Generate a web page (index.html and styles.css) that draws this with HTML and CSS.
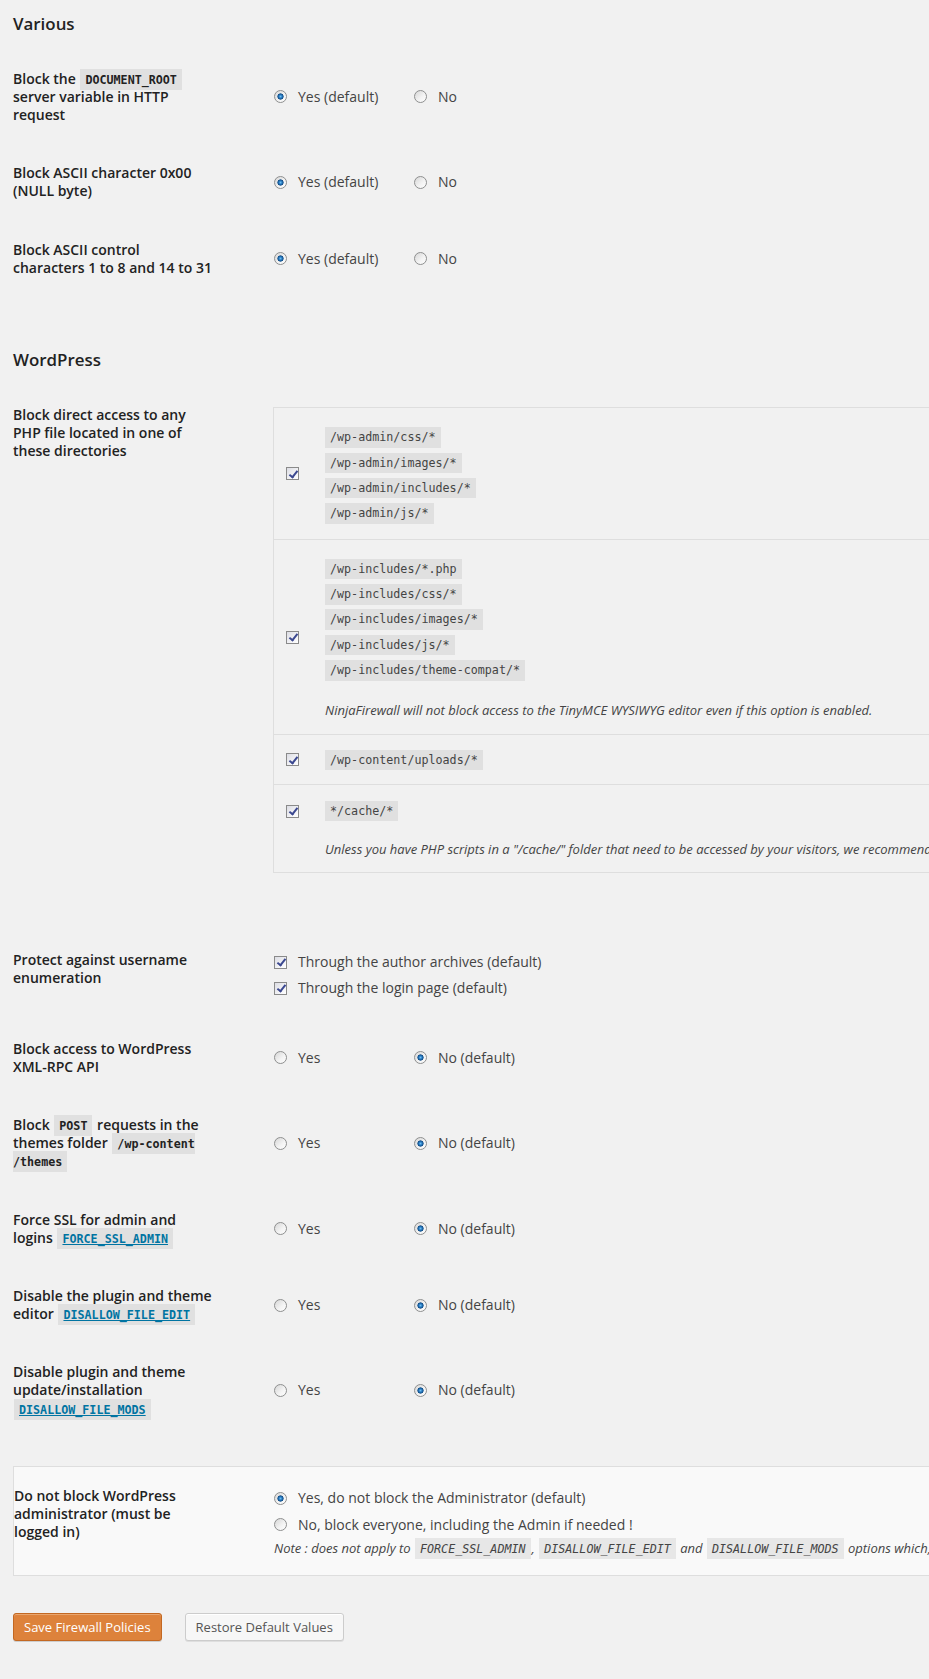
FILE: index.html
```html
<!DOCTYPE html>
<html lang="en">
<head>
    <meta charset="UTF-8">
    <title>Firewall Policies</title>
    <link rel="stylesheet" href="styles.css">
</head>
<body>
<div class="wrap">

    <div class="section">
        <h3 class="section-title">Various</h3>
        <div class="form-table">
            <div class="row">
                <div class="row-label">Block the <code>DOCUMENT_ROOT</code> server variable in HTTP request</div>
                <div class="row-field">
                    <label class="opt"><input type="radio" name="doc_root" checked>Yes (default)</label>
                    <label class="opt"><input type="radio" name="doc_root">No</label>
                </div>
            </div>
            <div class="row">
                <div class="row-label">Block ASCII character 0x00 (NULL byte)</div>
                <div class="row-field">
                    <label class="opt"><input type="radio" name="null_byte" checked>Yes (default)</label>
                    <label class="opt"><input type="radio" name="null_byte">No</label>
                </div>
            </div>
            <div class="row">
                <div class="row-label">Block ASCII control characters 1 to 8 and 14 to 31</div>
                <div class="row-field">
                    <label class="opt"><input type="radio" name="ascii_ctrl" checked>Yes (default)</label>
                    <label class="opt"><input type="radio" name="ascii_ctrl">No</label>
                </div>
            </div>
        </div>
    </div>

    <div class="section">
        <h3 class="section-title">WordPress</h3>
        <div class="form-table">
            <div class="row">
                <div class="row-label">Block direct access to any PHP file located in one of these directories</div>
                <div class="row-field dirs">
                    <div class="dir-box">
                        <div class="dir-row">
                            <div class="dir-check"><input type="checkbox" checked></div>
                            <div class="dir-body pad-a">
                                <div class="paths">
                                    <code>/wp-admin/css/*</code>
                                    <code>/wp-admin/images/*</code>
                                    <code>/wp-admin/includes/*</code>
                                    <code>/wp-admin/js/*</code>
                                </div>
                            </div>
                        </div>
                        <div class="dir-row">
                            <div class="dir-check"><input type="checkbox" checked></div>
                            <div class="dir-body pad-b">
                                <div class="paths">
                                    <code>/wp-includes/*.php</code>
                                    <code>/wp-includes/css/*</code>
                                    <code>/wp-includes/images/*</code>
                                    <code>/wp-includes/js/*</code>
                                    <code>/wp-includes/theme-compat/*</code>
                                </div>
                                <p class="dir-note">NinjaFirewall will not block access to the TinyMCE WYSIWYG editor even if this option is enabled.</p>
                            </div>
                        </div>
                        <div class="dir-row">
                            <div class="dir-check"><input type="checkbox" checked></div>
                            <div class="dir-body pad-c">
                                <div class="paths">
                                    <code>/wp-content/uploads/*</code>
                                </div>
                            </div>
                        </div>
                        <div class="dir-row top">
                            <div class="dir-check"><input type="checkbox" checked></div>
                            <div class="dir-body pad-d">
                                <div class="paths">
                                    <code>*/cache/*</code>
                                </div>
                                <p class="dir-note note-d">Unless you have PHP scripts in a "/cache/" folder that need to be accessed by your visitors, we recommend to enable this option.</p>
                            </div>
                        </div>
                    </div>
                </div>
            </div>

            <div class="row">
                <div class="row-label">Protect against username enumeration</div>
                <div class="row-field stack">
                    <label class="opt"><input type="checkbox" checked>Through the author archives (default)</label>
                    <label class="opt"><input type="checkbox" checked>Through the login page (default)</label>
                </div>
            </div>
            <div class="row">
                <div class="row-label">Block access to WordPress XML-RPC API</div>
                <div class="row-field">
                    <label class="opt"><input type="radio" name="xmlrpc">Yes</label>
                    <label class="opt"><input type="radio" name="xmlrpc" checked>No (default)</label>
                </div>
            </div>
            <div class="row">
                <div class="row-label">Block <code>POST</code> requests in the themes folder <code>/wp-content<wbr>/themes</code></div>
                <div class="row-field">
                    <label class="opt"><input type="radio" name="post_themes">Yes</label>
                    <label class="opt"><input type="radio" name="post_themes" checked>No (default)</label>
                </div>
            </div>
            <div class="row">
                <div class="row-label">Force SSL for admin and logins <code><a href="#">FORCE_SSL_ADMIN</a></code></div>
                <div class="row-field">
                    <label class="opt"><input type="radio" name="force_ssl">Yes</label>
                    <label class="opt"><input type="radio" name="force_ssl" checked>No (default)</label>
                </div>
            </div>
            <div class="row">
                <div class="row-label">Disable the plugin and theme editor <code><a href="#">DISALLOW_FILE_EDIT</a></code></div>
                <div class="row-field">
                    <label class="opt"><input type="radio" name="file_edit">Yes</label>
                    <label class="opt"><input type="radio" name="file_edit" checked>No (default)</label>
                </div>
            </div>
            <div class="row">
                <div class="row-label">Disable plugin and theme update/installation <code><a href="#">DISALLOW_FILE_MODS</a></code></div>
                <div class="row-field">
                    <label class="opt"><input type="radio" name="file_mods">Yes</label>
                    <label class="opt"><input type="radio" name="file_mods" checked>No (default)</label>
                </div>
            </div>
        </div>
    </div>

    <div class="admin-box">
        <div class="row-label">Do not block WordPress administrator (must be logged in)</div>
        <div class="admin-field">
            <label class="opt"><input type="radio" name="admin" checked>Yes, do not block the Administrator (default)</label>
            <label class="opt"><input type="radio" name="admin">No, block everyone, including the Admin if needed !</label>
            <p class="admin-note">Note : does not apply to <code>FORCE_SSL_ADMIN</code>, <code>DISALLOW_FILE_EDIT</code> and <code>DISALLOW_FILE_MODS</code> options which, if enabled, are always enforced.</p>
        </div>
    </div>

    <div class="actions">
        <button class="button button-primary">Save Firewall Policies</button>
        <button class="button button-secondary">Restore Default Values</button>
    </div>

</div>
</body>
</html>
```

FILE: styles.css
```css
*{
    box-sizing: border-box;
}

body{
    margin: 0;
    background-color: #f1f1f1;
    color: #444;
    font-family: "Open Sans", "Liberation Sans", sans-serif;
    font-size: 13px;
    line-height: 1.4;
}

.wrap{
    overflow: hidden; /*the tables are wider than the window*/
    padding: 12px 0 20px 13px;
}

.section + .section{
    margin-top: 51px;
}

.section-title{
    margin: 0 0 14px;
    font-size: 16.9px;
    line-height: 23.7px;
    font-weight: 600;
    color: #222;
}

code{
    font-family: "DejaVu Sans Mono", "Liberation Mono", monospace;
    font-size: 11.7px;
    padding: 4px 5px 3px;
    margin: 0 1px;
    background-color: rgba(0, 0, 0, .07);
}

code a{
    color: #0074a2;
}

/* radios and checkboxes drawn like the old native ones */
input[type=radio],
input[type=checkbox]{
    -webkit-appearance: none;
    appearance: none;
    flex: none;
    position: relative;
    width: 13px;
    height: 13px;
    margin: 0;
    border: 1px solid #8e8f8f;
    background: linear-gradient(135deg, #d6d6d6 0%, #f4f4f4 60%, #fdfdfd 100%);
}

input[type=radio]{
    border-radius: 50%;
}

input[type=radio]:checked{
    background:
        radial-gradient(circle, #6cc0f2 0, #2f82c8 1.4px, #0d4a85 2.8px, rgba(13, 74, 133, 0) 3.4px),
        linear-gradient(135deg, #d6d6d6 0%, #f4f4f4 60%, #fdfdfd 100%);
}

input[type=checkbox]{
    border-color: #8a8a8a;
    background: linear-gradient(135deg, #dcdde4 0%, #f6f6f8 70%, #ffffff 100%);
}

input[type=checkbox]:checked::after{
    content: "";
    position: absolute;
    left: 3.5px;
    top: 0.5px;
    width: 3px;
    height: 7px;
    border: solid #3b4890;
    border-width: 0 2px 2px 0;
    transform: rotate(38deg);
}

.form-table{
    width: 1300px;
}

.row{
    display: flex;
    font-size: 14px;
    line-height: 1.3;
}

.row-label{
    flex: none;
    width: 200px;
    margin-right: 60px;
    padding: 20px 0;
    font-weight: 600;
    color: #222;
}

.row-field{
    display: flex;
    align-items: center;
}

.opt{
    display: flex;
    align-items: center;
    color: #444;
    white-space: nowrap;
}

.row-field .opt:first-child{
    width: 140px;
}

.opt input[type=radio],
.opt input[type=checkbox]{
    margin: 0 11px 0 1px;
}

/* username enumeration */
.stack{
    flex-direction: column;
    align-items: flex-start;
    justify-content: center;
    padding: 18.5px 0;
}

.stack .opt{
    height: 26px;
}

/* directories */
.dirs{
    align-items: flex-start;
    padding: 21.5px 0 57.5px;
}

.dir-box{
    width: 1000px;
    border: 1px solid #dedede;
}

.dir-row{
    display: flex;
    align-items: center;
}

.dir-row + .dir-row{
    border-top: 1px solid #dedede;
}

.dir-row.top{
    align-items: flex-start;
}

.dir-check{
    flex: none;
    display: flex;
    width: 51px;
    padding-left: 12px;
}

.dir-row.top .dir-check{
    padding-top: 19.5px;
}

.paths{
    display: flex;
    flex-direction: column;
    align-items: flex-start;
    gap: 4.7px;
}

.paths code{
    display: block;
    margin: 0;
    line-height: 13.6px;
}

.pad-a{ padding: 19px 0 15.5px; }
.pad-b{ padding: 18.7px 0 15.3px; }
.pad-c{ padding: 14.7px 0 13.7px; }
.pad-d{ padding: 15.7px 0 14.2px; }

.dir-note{
    margin: 20px 0 0;
    font-size: 13px;
    line-height: 18.2px;
    font-style: italic;
    white-space: nowrap;
}

.dir-note.note-d{
    margin-top: 18.3px;
}

/* administrator */
.admin-box{
    display: flex;
    width: 1300px;
    margin-top: 28px;
    border: 1px solid #dedede;
    background-color: #f9f9f9;
    font-size: 14px;
    line-height: 1.3;
}

.admin-field{
    padding: 18px 0 14px;
}

.admin-field .opt{
    height: 26.7px;
}

.admin-field .opt input[type=radio]{
    margin-left: 0;
}

.admin-note{
    margin: 0;
    font-size: 13px;
    line-height: 21.6px;
    font-style: italic;
    white-space: nowrap;
}

/* buttons */
.actions{
    display: flex;
    gap: 23px;
    margin-top: 37px;
}

.button{
    height: 28px;
    padding: 0 10px 1px;
    border: 1px solid;
    border-radius: 3px;
    font-family: inherit;
    font-size: 13px;
    line-height: 26px;
    cursor: pointer;
}

.button-primary{
    background-color: #dd823b;
    border-color: #c36822;
    color: #fff;
    box-shadow: inset 0 1px 0 #e9a66f, 0 1px 0 rgba(0, 0, 0, .15);
}

.button-secondary{
    background-color: #f7f7f7;
    border-color: #ccc;
    color: #555;
    box-shadow: inset 0 1px 0 #fff, 0 1px 0 rgba(0, 0, 0, .08);
}
```
